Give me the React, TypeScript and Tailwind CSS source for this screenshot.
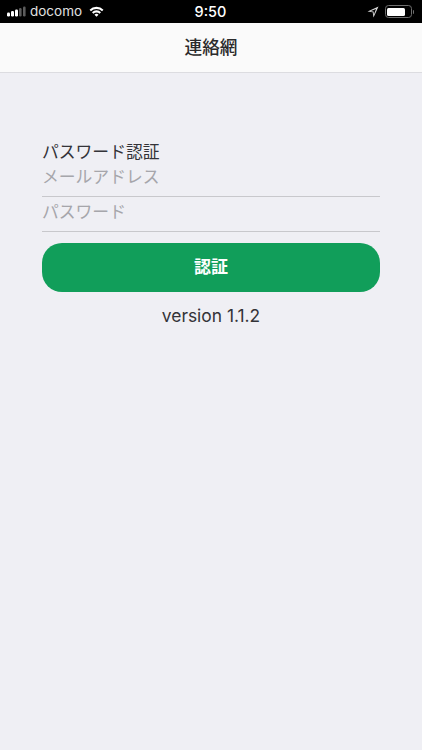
const font = { fontFamily: '"Inter", "Noto Sans CJK JP", sans-serif' };

export default function App() {
  return (
    <div style={font} className="flex h-[750px] w-[422px] flex-col overflow-hidden bg-[#efeff4]">
      <div className="flex h-[23px] items-center bg-black pl-[7px] pr-[7px] text-white">
        <div className="flex w-[165px] items-center">
          <svg width="19" height="12" viewBox="0 0 19 12" className="mr-[4px]">
            <rect x="0" y="6.5" width="3" height="4" rx="1.2" fill="#fff" />
            <rect x="4" y="5" width="3" height="5.5" rx="1.2" fill="#fff" />
            <rect x="8" y="3.5" width="3" height="7" rx="1.2" fill="#fff" />
            <rect x="12" y="2" width="2.6" height="8.5" rx="1.2" fill="#5c5c5c" />
            <rect x="16" y="0.5" width="2.6" height="10" rx="1.2" fill="#5c5c5c" />
          </svg>
          <span className="text-[13.5px] leading-[23px] text-[#e0e0e0]">docomo</span>
          <svg width="15" height="11" viewBox="0 0 17 12" className="ml-[7px]">
            <path d="M0.6 4 A11 11 0 0 1 16.4 4 L14.8 5.7 A8.8 8.8 0 0 0 2.2 5.7 Z" fill="#fff" />
            <path d="M3.4 6.9 A7 7 0 0 1 13.6 6.9 L12 8.6 A4.8 4.8 0 0 0 5 8.6 Z" fill="#fff" />
            <path d="M6.2 9.7 A3.2 3.2 0 0 1 10.8 9.7 L8.5 12 Z" fill="#fff" />
          </svg>
        </div>
        <div className="w-[77px] text-center text-[14.5px] font-medium leading-[23px]">9:50</div>
        <div className="flex flex-1 items-center justify-end">
          <svg width="12" height="12" viewBox="0 0 12 12" className="mr-[6px]">
            <path d="M11.5 0.5 L0.5 5.5 L5.7 6.3 L6.5 11.5 Z M9 3 L3.4 5.3 L6.6 5.5 L6.9 8.6 Z" fill="#d8d8d8" fillRule="evenodd" />
          </svg>
          <div className="mr-[1px] flex items-center">
            <div className="flex h-[13px] w-[27px] items-center rounded-[3.5px] border border-[#6f6f6f] p-[1.5px]">
              <div className="h-full w-[18px] rounded-[1.5px] bg-white" />
            </div>
            <div className="ml-[1px] h-[4px] w-[1.5px] rounded-r-sm bg-[#6f6f6f]" />
          </div>
        </div>
      </div>

      <div className="flex h-[50px] items-center justify-center border-b border-[#dcdce0] bg-[#fafafa] pt-[2px]">
        <span className="text-[17.7px] font-medium text-[#2b2b2b]">連絡網</span>
      </div>

      <div className="flex flex-col px-[42px] pt-[67px]">
        <div className="text-[16.8px] leading-[24px] text-[#333338]">パスワード認証</div>
        <div className="h-[33px] border-b border-[#c8c8cc] text-[16.8px] leading-[26px] text-[#a6a6ab]">メールアドレス</div>
        <div className="mt-[2px] h-[33px] border-b border-[#c8c8cc] text-[16.8px] leading-[26px] text-[#a6a6ab]">パスワード</div>
        <div className="mt-[11px] flex h-[49px] items-center justify-center rounded-[20px] bg-[#119e5a] pt-[1px] text-[17px] font-bold text-white">認証</div>
        <div className="mt-[12px] text-center text-[17.4px] leading-[24px] text-[#333338]">version 1.1.2</div>
      </div>
    </div>
  );
}
